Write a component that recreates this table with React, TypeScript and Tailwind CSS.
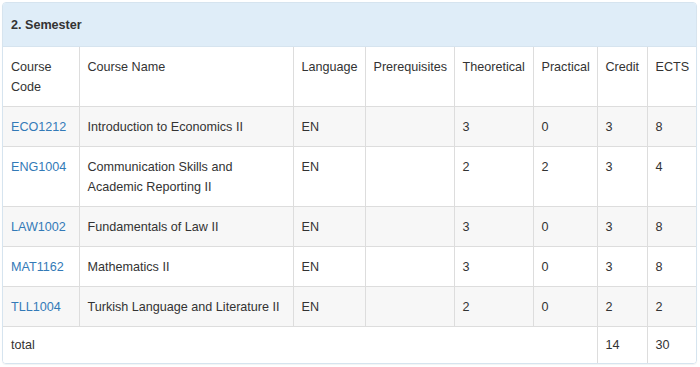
import React from "react";

type Course = {
  code: string;
  name: string;
  lang: string;
  prereq: string;
  theo: number;
  prac: number;
  credit: number;
  ects: number;
};

const courses: Course[] = [
  { code: "ECO1212", name: "Introduction to Economics II", lang: "EN", prereq: "", theo: 3, prac: 0, credit: 3, ects: 8 },
  { code: "ENG1004", name: "Communication Skills and Academic Reporting II", lang: "EN", prereq: "", theo: 2, prac: 2, credit: 3, ects: 4 },
  { code: "LAW1002", name: "Fundamentals of Law II", lang: "EN", prereq: "", theo: 3, prac: 0, credit: 3, ects: 8 },
  { code: "MAT1162", name: "Mathematics II", lang: "EN", prereq: "", theo: 3, prac: 0, credit: 3, ects: 8 },
  { code: "TLL1004", name: "Turkish Language and Literature II", lang: "EN", prereq: "", theo: 2, prac: 0, credit: 2, ects: 2 },
];

const base = "border border-[#ddd] px-2 align-top text-left font-normal";
const cell = `${base} pt-[10px] pb-[9px]`;
const totalCell = `${base} pt-[8px] pb-[8px]`;

export default function App() {
  return (
    <div className="bg-white min-h-[367px] pt-[2px] pl-[2px]" style={{ fontFamily: '"Liberation Sans", Arial, sans-serif' }}>
      <div className="w-[695px] border border-[#d6e4ef] rounded-[4px] overflow-hidden text-[12.6px] leading-5 text-[#333] shadow-[0_1px_1px_rgba(0,0,0,0.05)]">
        <div className="bg-[#dfedf8] px-2 pt-3 pb-[11px] font-bold border-b border-[#d6e4ef]">2. Semester</div>
        <table className="w-full table-fixed border-collapse border-hidden">
          <colgroup>
            <col className="w-[76px]" />
            <col className="w-[214px]" />
            <col className="w-[72px]" />
            <col className="w-[89px]" />
            <col className="w-[79px]" />
            <col className="w-[64px]" />
            <col className="w-[50px]" />
            <col />
          </colgroup>
          <thead>
            <tr>
              <th className={cell}>Course Code</th>
              <th className={cell}>Course Name</th>
              <th className={cell}>Language</th>
              <th className={cell}>Prerequisites</th>
              <th className={cell}>Theoretical</th>
              <th className={cell}>Practical</th>
              <th className={cell}>Credit</th>
              <th className={cell}>ECTS</th>
            </tr>
          </thead>
          <tbody>
            {courses.map((c, i) => (
              <tr key={c.code} className={i % 2 === 0 ? "bg-[#f7f7f7]" : "bg-white"}>
                <td className={cell}>
                  <a href="#" className="text-[#337ab7]">{c.code}</a>
                </td>
                <td className={cell}>{c.name}</td>
                <td className={cell}>{c.lang}</td>
                <td className={cell}>{c.prereq}</td>
                <td className={cell}>{c.theo}</td>
                <td className={cell}>{c.prac}</td>
                <td className={cell}>{c.credit}</td>
                <td className={cell}>{c.ects}</td>
              </tr>
            ))}
            <tr className="bg-white">
              <td className={totalCell} colSpan={6}>total</td>
              <td className={totalCell}>14</td>
              <td className={totalCell}>30</td>
            </tr>
          </tbody>
        </table>
      </div>
    </div>
  );
}
